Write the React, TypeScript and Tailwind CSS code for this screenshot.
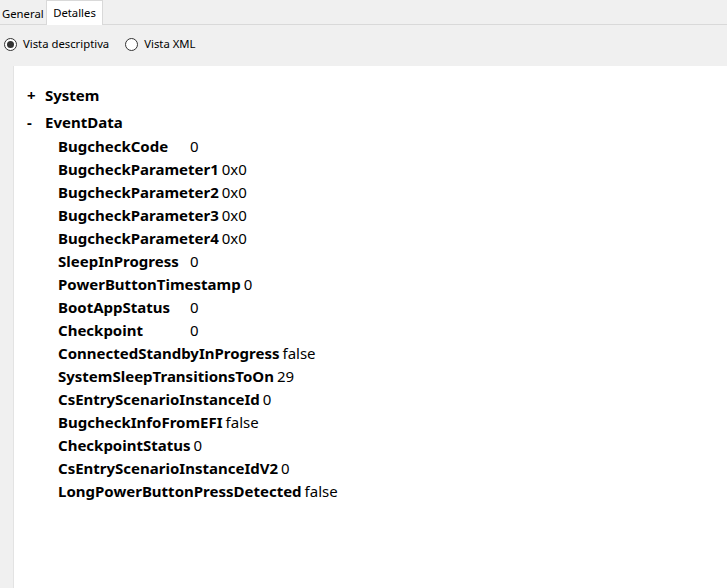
import { useState } from "react";

const rows: [string, string][] = [
  ["BugcheckCode", "0"],
  ["BugcheckParameter1", "0x0"],
  ["BugcheckParameter2", "0x0"],
  ["BugcheckParameter3", "0x0"],
  ["BugcheckParameter4", "0x0"],
  ["SleepInProgress", "0"],
  ["PowerButtonTimestamp", "0"],
  ["BootAppStatus", "0"],
  ["Checkpoint", "0"],
  ["ConnectedStandbyInProgress", "false"],
  ["SystemSleepTransitionsToOn", "29"],
  ["CsEntryScenarioInstanceId", "0"],
  ["BugcheckInfoFromEFI", "false"],
  ["CheckpointStatus", "0"],
  ["CsEntryScenarioInstanceIdV2", "0"],
  ["LongPowerButtonPressDetected", "false"],
];

const Radio = ({ checked, label, onClick }: { checked: boolean; label: string; onClick: () => void }) => (
  <button className="flex items-center gap-[6px]" onClick={onClick}>
    <span className="w-[13px] h-[13px] rounded-full border border-[#333] bg-white flex items-center justify-center">
      {checked && <span className="w-[7px] h-[7px] rounded-full bg-[#333]" />}
    </span>
    <span className="text-[11.3px] text-black">{label}</span>
  </button>
);

export default function App() {
  const [view, setView] = useState<"desc" | "xml">("desc");
  const [systemOpen, setSystemOpen] = useState(false);
  const [dataOpen, setDataOpen] = useState(true);

  return (
    <div
      className="w-[727px] h-[588px] bg-[#f0f0f0] flex flex-col overflow-hidden"
      style={{ fontFamily: '"Noto Sans", "Open Sans", sans-serif' }}
    >
      {/* Tabs */}
      <div className="h-[25px] flex items-end border-b border-[#d9d9d9] shrink-0">
        <div className="h-[20px] w-[46px] pl-[2px] flex items-center text-[11.3px] text-black">General</div>
        <div className="h-[25px] w-[57px] -mb-px bg-white border border-b-0 border-[#d9d9d9] flex items-center justify-center text-[11.3px] text-black">
          Detalles
        </div>
      </div>

      {/* View selector */}
      <div className="h-[41px] shrink-0 flex items-center gap-[16px] pl-[4px] pb-[2px]">
        <Radio checked={view === "desc"} label="Vista descriptiva" onClick={() => setView("desc")} />
        <Radio checked={view === "xml"} label="Vista XML" onClick={() => setView("xml")} />
      </div>

      {/* Detail panel */}
      <div className="flex-1 ml-[13px] bg-white border-l border-[#e3e3e3] pt-[18px] pl-[13px] text-black">
        <div className="flex items-center h-[23px] text-[15px] font-bold cursor-pointer" onClick={() => setSystemOpen(!systemOpen)}>
          <span className="w-[18px]">{systemOpen ? "-" : "+"}</span>
          <span>System</span>
        </div>
        <div className="flex items-center h-[29px] pt-[2px] text-[15px] font-bold cursor-pointer" onClick={() => setDataOpen(!dataOpen)}>
          <span className="w-[18px]">{dataOpen ? "-" : "+"}</span>
          <span>EventData</span>
        </div>
        {dataOpen && (
          <div className="pl-[31px] -mt-[1px]">
            {rows.map(([k, v]) => (
              <div key={k} className="flex items-center h-[23px] text-[15px]">
                <span className="min-w-[132px] pr-[3px] font-bold whitespace-nowrap">{k}</span>
                <span className="whitespace-nowrap">{v}</span>
              </div>
            ))}
          </div>
        )}
      </div>
    </div>
  );
}
